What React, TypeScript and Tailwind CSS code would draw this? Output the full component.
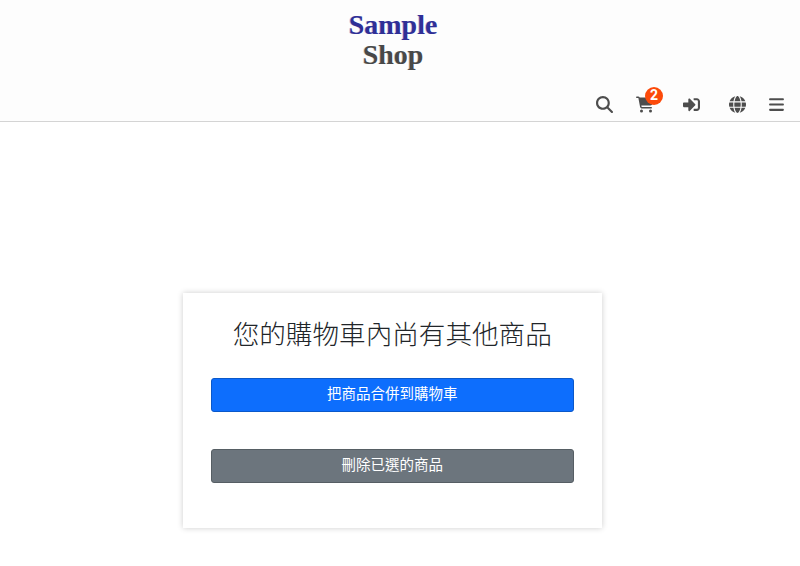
import { FaMagnifyingGlass, FaCartShopping, FaGlobe, FaBars } from "react-icons/fa6";
import { FaSignInAlt } from "react-icons/fa";

const cjk = "font-['Roboto','Noto_Sans_CJK_TC',sans-serif]";

function Logo() {
  return (
    <div className="flex flex-col items-center pt-[10px] pl-[2px] font-['Liberation_Serif',serif] text-[28px] leading-[30px] font-bold">
      <span className="text-[#2f2f96] [text-shadow:-1px_0_0_rgba(47,47,150,0.25)]">Sample</span>
      <span className="text-[#484848] [text-shadow:-1px_0_0_rgba(72,72,72,0.25)]">Shop</span>
    </div>
  );
}

function Header() {
  return (
    <header className="h-[122px] bg-[#fdfdfd] border-b border-[#d4d4d4] flex flex-col">
      <div className="w-[784px] h-[71px]">
        <Logo />
      </div>
      <nav className="w-[800px] flex items-center h-[24px] mt-[21px] text-[#4d4d4d]">
        <FaMagnifyingGlass className="ml-[596px] w-[17px] h-[17px]" />
        <div className="relative ml-[23px] w-[18px] h-[17px]">
          <FaCartShopping className="w-[18px] h-[17px]" />
          <span className="absolute left-[9px] -top-[9px] w-[18px] h-[18px] rounded-full bg-[#fc4a0a] text-white text-[14px] font-bold font-['Roboto',sans-serif] flex items-center justify-center">
            2
          </span>
        </div>
        <FaSignInAlt className="ml-[29px] w-[17px] h-[17px]" />
        <FaGlobe className="ml-[29px] w-[17px] h-[17px]" />
        <FaBars className="ml-[23px] w-[15px] h-[17px]" />
      </nav>
    </header>
  );
}

export default function App() {
  return (
    <div className={`min-h-[566px] bg-white overflow-hidden ${cjk}`}>
      <Header />
      <div className="w-[785px] flex justify-center pt-[171px]">
        <div className="w-[419px] h-[235px] bg-white shadow-[0_0_6px_rgba(0,0,0,0.2)] pl-[27.5px] pr-[28px]">
          <h1 className="pt-[24px] text-center text-[26.6px] leading-[36px] text-[#212529] font-light">
            您的購物車內尚有其他商品
          </h1>
          <button className="mt-[25px] w-full h-[34px] pb-[1px] rounded-[3px] bg-[#0d6efd] border border-[#0a58ca] text-white text-[14.5px]">
            把商品合併到購物車
          </button>
          <button className="mt-[37px] w-full h-[34px] pb-[1px] rounded-[3px] bg-[#6c757d] border border-[#565e64] text-white text-[14.5px]">
            刪除已選的商品
          </button>
        </div>
      </div>
    </div>
  );
}
